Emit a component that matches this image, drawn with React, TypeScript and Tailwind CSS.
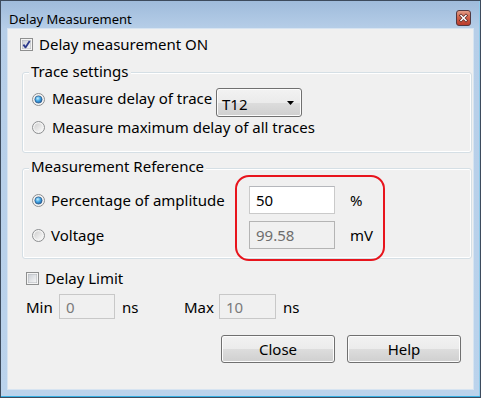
import React, { useId } from "react";

function useSafeId() {
  const raw = useId();
  return "g" + raw.replace(/[^a-zA-Z0-9]/g, "");
}

function Radio({ checked }: { checked?: boolean }) {
  const id = useSafeId();
  return (
    <svg width="13" height="13" viewBox="0 0 13 13" className="block shrink-0">
      <defs>
        <linearGradient id={id + "o"} x1="0" y1="0" x2="1" y2="1">
          <stop offset="0" stopColor="#cfcfcf" />
          <stop offset="1" stopColor="#fbfbfb" />
        </linearGradient>
        <radialGradient id={id + "d"} cx="0.4" cy="0.35" r="0.75">
          <stop offset="0" stopColor="#c2eefe" />
          <stop offset="0.45" stopColor="#45a8e6" />
          <stop offset="1" stopColor="#17508f" />
        </radialGradient>
      </defs>
      <circle cx="6.5" cy="6.5" r="6" fill="#f4f4f4" stroke="#8c8e90" />
      <circle cx="6.5" cy="6.5" r="4.3" fill={`url(#${id}o)`} />
      {checked && (
        <circle cx="6.5" cy="6.5" r="3.6" fill={`url(#${id}d)`} stroke="#2b5888" strokeWidth="0.7" />
      )}
    </svg>
  );
}

function Checkbox({ checked }: { checked?: boolean }) {
  const id = useSafeId();
  return (
    <svg width="13" height="13" viewBox="0 0 13 13" className="block shrink-0">
      <defs>
        <linearGradient id={id} x1="0" y1="0" x2="1" y2="1">
          <stop offset="0" stopColor="#cbcfd5" />
          <stop offset="1" stopColor="#f7f7f7" />
        </linearGradient>
      </defs>
      <rect x="0.5" y="0.5" width="12" height="12" fill="#f4f4f4" stroke="#8e8f8f" />
      <rect x="2.25" y="2.25" width="8.5" height="8.5" fill={`url(#${id})`} stroke="#b0b4ba" strokeWidth="0.5" />
      {checked && (
        <path d="M3.4 6.6 L5.5 9.4 L9.7 3.1" fill="none" stroke="#2c3a8c" strokeWidth="1.8" strokeLinejoin="round" />
      )}
    </svg>
  );
}

function CloseBtn() {
  const id = useSafeId();
  return (
    <svg width="15" height="16" viewBox="0 0 15 16" className="block mt-[9px] shrink-0">
      <defs>
        <linearGradient id={id} x1="0" y1="0" x2="0" y2="1">
          <stop offset="0" stopColor="#e5a18c" />
          <stop offset="0.45" stopColor="#d0634a" />
          <stop offset="1" stopColor="#b9382a" />
        </linearGradient>
      </defs>
      <rect x="0.5" y="0.5" width="14" height="15" rx="2.5" fill={`url(#${id})`} stroke="#523840" />
      <path d="M5 5.5 L10 10.5 M10 5.5 L5 10.5" stroke="#5b2a27" strokeWidth="3" strokeLinecap="square" />
      <path d="M5 5.5 L10 10.5 M10 5.5 L5 10.5" stroke="#ffffff" strokeWidth="1.5" strokeLinecap="square" />
    </svg>
  );
}

function GroupBox({
  title,
  className,
  titleClass,
  children,
}: {
  title: string;
  className: string;
  titleClass: string;
  children: React.ReactNode;
}) {
  return (
    <div
      className={`ml-[14px] w-[450px] shrink-0 border border-[#d5dfe5] rounded-[3px] shadow-[inset_0_0_0_1px_#ffffff] ${className}`}
    >
      <div className={`${titleClass} ml-[6px] px-[2px] w-fit bg-[#f0f0f0] leading-[18px]`}>{title}</div>
      {children}
    </div>
  );
}

function Field({ value, disabled, className }: { value: string; disabled?: boolean; className: string }) {
  return (
    <div
      className={`flex items-center pl-[6px] border shrink-0 ${
        disabled
          ? "bg-[#f0f0f0] border-[#b4b4b4] text-[#6d6d6d]"
          : "bg-white border-[#cacaca] border-t-[#b5b7bc]"
      } ${className}`}
    >
      {value}
    </div>
  );
}

function Button({ label }: { label: string }) {
  return (
    <div className="w-[114px] h-[28px] rounded-[3px] border border-[#707070] bg-[linear-gradient(180deg,#f2f2f2_0%,#ebebeb_50%,#dddddd_50%,#cfcfcf_100%)] shadow-[inset_0_0_0_1px_#fcfcfc] flex items-center justify-center">
      {label}
    </div>
  );
}

export default function App() {
  return (
    <div className="w-[481px] h-[398px] flex flex-col border border-[#3d4b5d] bg-[linear-gradient(180deg,#9fbbdb_0px,#b6cee8_28px,#bbd3ec_100%)] shadow-[inset_0_-1px_0_#38b0e3,inset_-1px_0_0_#8fcbea] font-['Noto_Sans',sans-serif] text-black">
      <div className="h-[28px] flex items-start justify-between pl-[8px] pr-[9px] shrink-0">
        <div className="mt-[10px] text-[13px] leading-[16px]">Delay Measurement</div>
        <CloseBtn />
      </div>
      <div className="mx-[7px] h-[360px] bg-[#f0f0f0] relative shrink-0 flex flex-col text-[15px] leading-[20px] shadow-[0_0_0_1px_#d7e4f1]">
        <div className="flex items-center h-[20px] mt-[5px] ml-[12px] gap-[6px]">
          <Checkbox checked />
          <span className="whitespace-nowrap">Delay measurement ON</span>
        </div>

        <GroupBox title="Trace settings" className="mt-[18px] h-[81px]" titleClass="-mt-[11px]">
          <div className="flex items-start mt-[8px] ml-[9px]">
            <div className="h-[20px] mt-[1px] flex items-center">
              <Radio checked />
            </div>
            <span className="ml-[7px] w-[164px] h-[20px] whitespace-nowrap">Measure delay of trace</span>
            <div className="w-[86px] h-[29px] rounded-[3px] border border-[#707070] bg-[linear-gradient(180deg,#f2f2f2_0%,#ebebeb_50%,#dddddd_50%,#cfcfcf_100%)] shadow-[inset_0_0_0_1px_#fcfcfc] flex items-center justify-between pl-[5px] pr-[7px]">
              <span className="mt-[3px]">T12</span>
              <svg width="7" height="4" viewBox="0 0 7 4" className="block">
                <path d="M0 0H7L3.5 4Z" fill="#000" />
              </svg>
            </div>
          </div>
          <div className="flex items-center h-[20px] ml-[9px]">
            <Radio />
            <span className="ml-[7px] whitespace-nowrap">Measure maximum delay of all traces</span>
          </div>
        </GroupBox>

        <GroupBox title="Measurement Reference" className="mt-[15px] h-[91px]" titleClass="-mt-[12px]">
          <div className="flex items-center h-[28px] mt-[11px] ml-[9px]">
            <Radio checked />
            <span className="ml-[6px] w-[198px] whitespace-nowrap">Percentage of amplitude</span>
            <Field value="50" className="w-[86px] h-[28px]" />
            <span className="ml-[15px]">%</span>
          </div>
          <div className="flex items-center h-[28px] mt-[7px] ml-[9px]">
            <Radio />
            <span className="ml-[6px] w-[198px] whitespace-nowrap">Voltage</span>
            <Field value="99.58" disabled className="w-[86px] h-[28px]" />
            <span className="ml-[15px]">mV</span>
          </div>
        </GroupBox>

        <div className="flex items-center h-[20px] mt-[9px] ml-[18px] gap-[6px]">
          <Checkbox />
          <span className="whitespace-nowrap">Delay Limit</span>
        </div>

        <div className="flex items-center h-[25px] mt-[6px] ml-[18px]">
          <span className="w-[33px]">Min</span>
          <Field value="0" disabled className="w-[56px] h-[25px] border-[#c8c8c8] text-[#7a7a7a]" />
          <span className="ml-[7px] w-[62px]">ns</span>
          <span className="w-[35px]">Max</span>
          <Field value="10" disabled className="w-[57px] h-[25px] border-[#c8c8c8] text-[#7a7a7a]" />
          <span className="ml-[7px]">ns</span>
        </div>

        <div className="flex justify-end gap-[12px] pr-[12px] mt-[16px]">
          <Button label="Close" />
          <Button label="Help" />
        </div>

        <div className="absolute left-[227px] top-[146px] w-[150px] h-[86px] border-2 border-[#e8141c] rounded-[14px] pointer-events-none" />
      </div>
    </div>
  );
}
